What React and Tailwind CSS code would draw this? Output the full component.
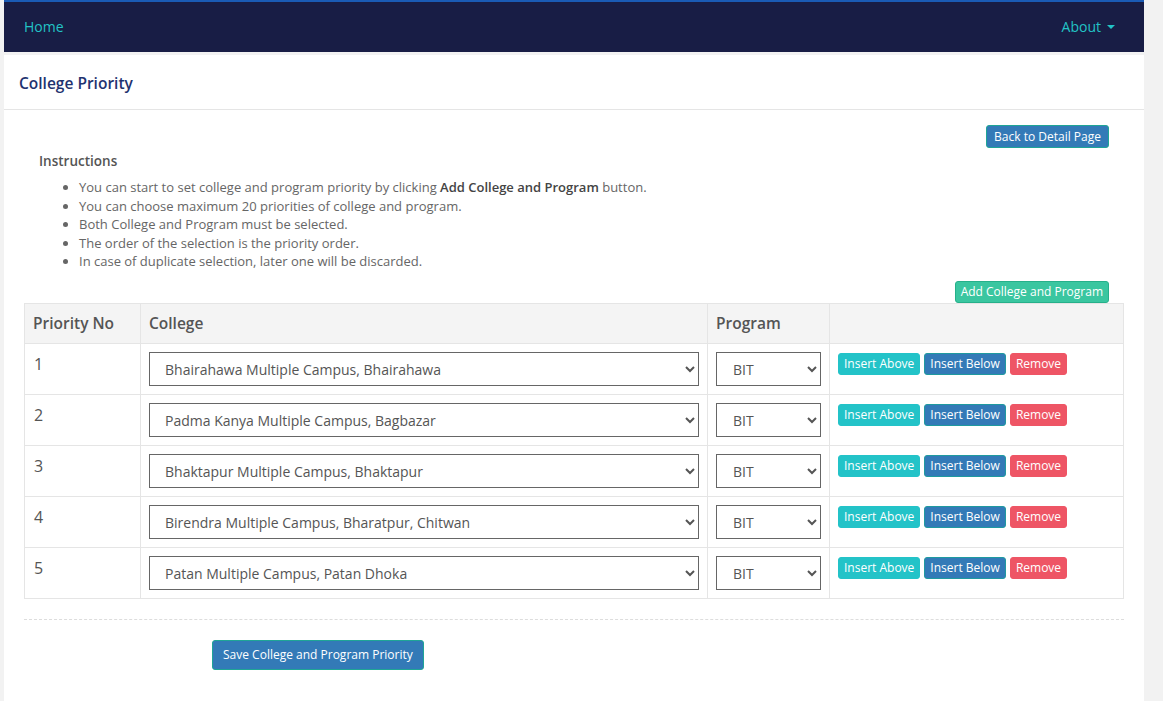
import React, { useState } from 'react';

const colleges = [
  'Bhairahawa Multiple Campus, Bhairahawa',
  'Padma Kanya Multiple Campus, Bagbazar',
  'Bhaktapur Multiple Campus, Bhaktapur',
  'Birendra Multiple Campus, Bharatpur, Chitwan',
  'Patan Multiple Campus, Patan Dhoka',
];

const instructions = [
  <>You can start to set college and program priority by clicking <b className="font-semibold text-[#444]">Add College and Program</b> button.</>,
  'You can choose maximum 20 priorities of college and program.',
  'Both College and Program must be selected.',
  'The order of the selection is the priority order.',
  'In case of duplicate selection, later one will be discarded.',
];

const PriorityRow = ({ no, college }) => (
  <tr className="h-[51px] border-t border-[#e5e5e5]">
    <td className="border-r border-[#e5e5e5] px-[9px] pt-[8px] align-top text-[16px] text-[#555]">{no}</td>
    <td className="border-r border-[#e5e5e5] px-[8px] pt-[8px] align-top">
      <select
        defaultValue={college}
        className="h-[34px] w-full border border-[#666] bg-white pb-[1px] pl-[11px] pr-[6px] pt-[2px] text-[14px] text-[#555] outline-none"
      >
        {colleges.map((c) => (
          <option key={c}>{c}</option>
        ))}
      </select>
    </td>
    <td className="border-r border-[#e5e5e5] px-[8px] pt-[8px] align-top">
      <select className="h-[34px] w-[105px] border border-[#666] bg-white pb-[1px] pl-[12px] pr-[6px] pt-[2px] text-[14px] text-[#555] outline-none">
        <option>BIT</option>
      </select>
    </td>
    <td className="px-[8px] pt-[9px] align-top">
      <div className="flex gap-[4px]">
        <button className="h-[22px] rounded-[3px] border border-[#23c3c8] bg-[#23c3c8] px-[5px] text-[12px] leading-none text-white">Insert Above</button>
        <button className="h-[22px] rounded-[3px] border border-[#1f9aa0] bg-[#337ab7] px-[5px] text-[12px] leading-none text-white">Insert Below</button>
        <button className="h-[22px] rounded-[3px] border border-[#ee5565] bg-[#ee5565] px-[5px] text-[12px] leading-none text-white">Remove</button>
      </div>
    </td>
  </tr>
);

const App = () => {
  const [rows] = useState(colleges);

  return (
    <div className="min-h-[701px] bg-[#f2f2f2] pl-[4px] font-['Open_Sans',sans-serif]">
      <div className="w-[1140px]">
        <div className="h-[2px] bg-[#1a5bb5]" />
        <nav className="flex h-[50px] items-center justify-between bg-[#181d45] px-[20px] pb-[2px]">
          <a className="text-[14px] text-[#22c3c6]">Home</a>
          <a className="flex items-center gap-[6px] pr-[9px] text-[14px] text-[#22c3c6]">
            About
            <span className="mt-[2px] inline-block h-0 w-0 border-x-[4px] border-t-[4px] border-x-transparent border-t-[#22c3c6]" />
          </a>
        </nav>
        <div className="mt-[3px] min-h-[646px] bg-white">
          <div className="flex h-[55px] items-center border-b border-[#e5e5e5] px-[15px] pt-[3px]">
            <h1 className="text-[15.5px] font-semibold text-[#1f3370]">College Priority</h1>
          </div>
          <div className="px-[20px] pt-[15px]">
            <div className="flex justify-end pr-[15px]">
              <button className="h-[23px] rounded-[3px] border border-[#1fa596] bg-[#337ab7] px-[7px] text-[12px] leading-none text-white">Back to Detail Page</button>
            </div>
            <div className="px-[15px] pt-[3px]">
              <h4 className="text-[13.5px] font-semibold text-[#555]">Instructions</h4>
              <ul className="mt-[7px] list-disc pl-[40px] text-[13px] leading-[18.5px] text-[#666]">
                {instructions.map((t, i) => (
                  <li key={i}>{t}</li>
                ))}
              </ul>
            </div>
            <div className="mt-[10px] flex justify-end pr-[15px]">
              <button className="h-[22px] rounded-[3px] border border-[#26b08a] bg-[#3ac6a0] px-[5px] text-[12px] leading-none text-white">Add College and Program</button>
            </div>
            <table className="w-[1100px] border-collapse border border-[#e5e5e5] text-left">
              <thead>
                <tr className="h-[40px] bg-[#f4f4f4]">
                  <th className="w-[116px] border-r border-[#e5e5e5] px-[8px] text-[15.5px] font-semibold text-[#555]">Priority No</th>
                  <th className="w-[567px] border-r border-[#e5e5e5] px-[8px] text-[15.5px] font-semibold text-[#555]">College</th>
                  <th className="w-[122px] border-r border-[#e5e5e5] px-[8px] text-[15.5px] font-semibold text-[#555]">Program</th>
                  <th />
                </tr>
              </thead>
              <tbody>
                {rows.map((c, i) => (
                  <PriorityRow key={c} no={i + 1} college={c} />
                ))}
              </tbody>
            </table>
            <div className="mt-[20px] w-[1100px] border-t border-dashed border-[#ddd]" />
            <div className="pl-[188px] pt-[20px]">
              <button className="h-[30px] rounded-[3px] border border-[#1fa596] bg-[#337ab7] px-[10px] text-[12px] leading-none text-white">Save College and Program Priority</button>
            </div>
          </div>
        </div>
      </div>
    </div>
  );
};

export default App;
